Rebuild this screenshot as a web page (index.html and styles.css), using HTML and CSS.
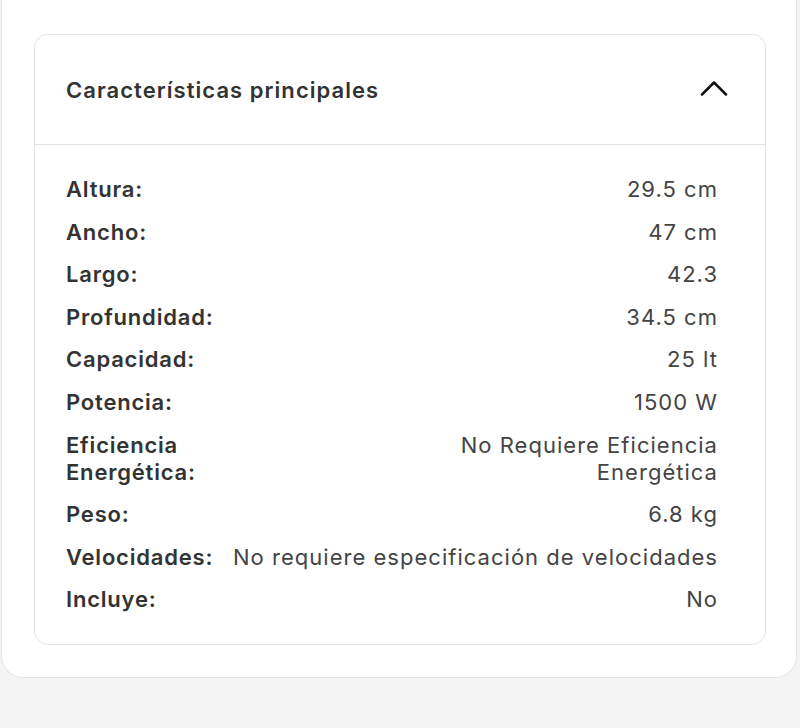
FILE: index.html
```html
<!DOCTYPE html>
<html lang="es">
<head>
    <meta charset="UTF-8">
    <meta name="viewport" content="width=device-width, initial-scale=1.0">
    <title>Características principales</title>
    <link rel="stylesheet" href="styles.css">
</head>
<body>
    <div class="page-card">
        <div class="specs">
            <div class="specs-header">
                <h2>Características principales</h2>
                <svg class="chevron" width="28" height="16" viewBox="0 0 28 16">
                    <path d="M2 14.5 L14 2.5 L26 14.5" fill="none" stroke="#111" stroke-width="2.5" stroke-linecap="round" stroke-linejoin="round"/>
                </svg>
            </div>
            <div class="specs-body">
                <div class="spec-row"><span class="spec-label">Altura:</span><span class="spec-value">29.5 cm</span></div>
                <div class="spec-row"><span class="spec-label">Ancho:</span><span class="spec-value">47 cm</span></div>
                <div class="spec-row"><span class="spec-label">Largo:</span><span class="spec-value">42.3</span></div>
                <div class="spec-row"><span class="spec-label">Profundidad:</span><span class="spec-value">34.5 cm</span></div>
                <div class="spec-row"><span class="spec-label">Capacidad:</span><span class="spec-value">25 lt</span></div>
                <div class="spec-row"><span class="spec-label">Potencia:</span><span class="spec-value">1500 W</span></div>
                <div class="spec-row"><span class="spec-label narrow">Eficiencia Energética:</span><span class="spec-value narrow">No Requiere Eficiencia Energética</span></div>
                <div class="spec-row"><span class="spec-label">Peso:</span><span class="spec-value">6.8 kg</span></div>
                <div class="spec-row"><span class="spec-label">Velocidades:</span><span class="spec-value">No requiere especificación de velocidades</span></div>
                <div class="spec-row"><span class="spec-label">Incluye:</span><span class="spec-value">No</span></div>
            </div>
        </div>
    </div>
</body>
</html>
```

FILE: styles.css
```css
* { box-sizing: border-box; }

body {
    margin: 0;
    padding: 0 3px 51px 1px;
    background-color: #f4f4f4;
    font-family: "Inter", "Noto Sans", sans-serif;
    color: #333;
}

.page-card {
    background-color: #fff;
    border: 1px solid #e4e4e4;
    border-top: none;
    border-radius: 0 0 22px 22px;
    padding: 34px 30px 32px 32px;
}

.specs {
    border: 1px solid #e2e2e2;
    border-radius: 14px;
    background-color: #fff;
}

.specs-header {
    height: 110px;
    display: flex;
    align-items: center;
    justify-content: space-between;
    padding: 0 37px 0 31px;
    border-bottom: 1px solid #e2e2e2;
}

.specs-header h2 {
    margin: 0;
    font-size: 22px;
    font-weight: 600;
    color: #333;
    letter-spacing: 1.05px;
}

.chevron { display: block; margin-top: -4px; }

.specs-body {
    padding: 31px 47px 31px 31px;
    display: flex;
    flex-direction: column;
    gap: 15.6px;
}

.spec-row {
    display: flex;
    justify-content: space-between;
    gap: 18px;
    font-size: 22px;
    line-height: 27px;
    letter-spacing: 0.8px;
}

.spec-label {
    font-weight: 600;
    color: #333;
    white-space: nowrap;
}

.spec-value {
    font-weight: 400;
    color: #444;
    text-align: right;
    letter-spacing: 1.02px;
}

.spec-label.narrow { white-space: normal; width: 160px; }
.spec-value.narrow { width: 290px; }
```
